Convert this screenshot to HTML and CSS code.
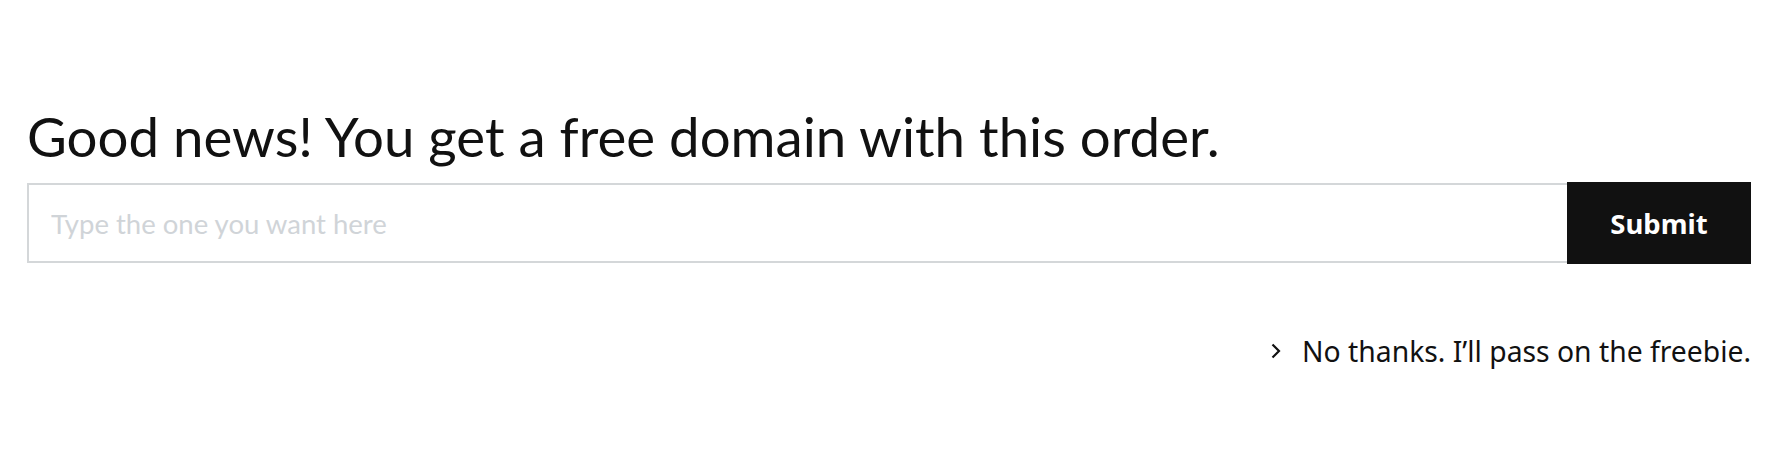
FILE: index.html
```html
<!DOCTYPE html>
<html lang="en">
  <head>
    <meta charset="UTF-8" />
    <meta name="viewport" content="width=device-width, initial-scale=1.0" />
    <title>Free domain</title>
    <link rel="stylesheet" href="styles.css">
  </head>
  <body>
    <div class="offer">
      <h1>Good news! You get a free domain with this order.</h1>

      <form class="domain-form">
        <input type="text" id="domain-input" placeholder="Type the one you want here" />
        <button type="submit">Submit</button>
      </form>

      <div class="skip">
        <a href="#">
          <svg class="chevron" width="12" height="18" viewBox="0 0 12 18">
            <path d="M2.5 2.5 L9 9 L2.5 15.5" fill="none" stroke="#111" stroke-width="2.2"/>
          </svg>
          No thanks. I’ll pass on the freebie.
        </a>
      </div>
    </div>
  </body>
</html>
```

FILE: styles.css
```css
* {
  margin: 0;
  padding: 0;
  box-sizing: border-box;
}

body {
  font-family: Lato, "Noto Sans", sans-serif;
  color: #111;
  background: #fff;
}

.offer {
  padding: 104px 41px 0 27px;
}

h1 {
  font-size: 54.6px;
  font-weight: 400;
  line-height: 64px;
  margin-bottom: 14px;
}

.domain-form {
  display: flex;
  height: 82px;
}

.domain-form input {
  flex: 1;
  border: 2px solid #d4d7d9;
  border-right: none;
  margin: 1px 0;
  padding: 0 22px;
  font-family: inherit;
  font-size: 27.5px;
  color: #111;
  outline: none;
}

.domain-form input::placeholder {
  color: #d0d4d8;
}

.domain-form button {
  width: 184px;
  background: #111;
  color: #fff;
  border: none;
  font-family: "Noto Sans", sans-serif;
  font-size: 27.5px;
  font-weight: 700;
  cursor: pointer;
}

.skip {
  display: flex;
  justify-content: flex-end;
  margin-top: 68px;
}

.skip a {
  display: flex;
  align-items: center;
  gap: 20px;
  text-decoration: none;
  color: #111;
  font-family: "Noto Sans", sans-serif;
  font-size: 28.3px;
}
```
